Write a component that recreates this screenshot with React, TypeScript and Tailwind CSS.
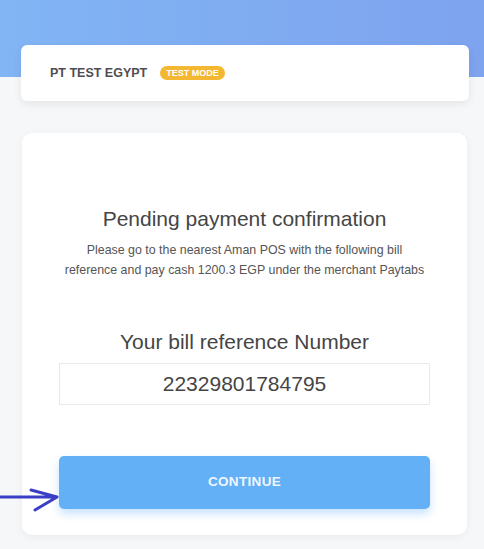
export default function App() {
  return (
    <main className="relative min-h-[549px] w-full overflow-hidden bg-[#f6f7f9] font-['Liberation_Sans',Arial,sans-serif]">
      {/* Blue header band */}
      <div className="absolute inset-x-0 top-0 h-[77px] bg-gradient-to-r from-[#81b5f4] to-[#7ea3ef]" />

      <div className="relative flex flex-col pl-[21px] pr-[15px] pt-[45px] pb-[14px]">
        {/* Merchant card */}
        <div className="flex h-[56px] items-center rounded-md bg-white pl-[29px] shadow-[0_3px_8px_rgba(0,0,0,0.08)]">
          <span className="text-[12.5px] font-bold text-[#4e4e52]">PT TEST EGYPT</span>
          <span className="ml-[13px] rounded-full bg-[#f4b731] px-[6px] py-[2px] text-[9px] font-bold leading-[10px] text-white">
            TEST MODE
          </span>
        </div>

        {/* Payment card */}
        <div className="mt-[32px] ml-[1px] mr-[2px] flex h-[402px] flex-col items-center rounded-[10px] bg-white px-[37px] pt-[74px] shadow-[0_2px_8px_rgba(0,0,0,0.05)]">
          <h1 className="text-[21px] leading-6 text-[#454545]">Pending payment confirmation</h1>
          <p className="mt-[9px] text-center text-[12.4px] leading-[20px] text-[#555]">
            Please go to the nearest Aman POS with the following bill
            <br />
            reference and pay cash 1200.3 EGP under the merchant Paytabs
          </p>

          <h2 className="mt-[50px] text-[21px] leading-6 text-[#454545]">Your bill reference Number</h2>
          <div className="mt-[9px] flex h-[42px] w-full items-center justify-center border border-[#e9e9ec] text-[21px] text-[#454545]">
            22329801784795
          </div>

          <button
            type="button"
            className="mt-[51px] h-[53px] w-full shrink-0 rounded-[5px] bg-[#64b0f6] text-[13.5px] font-bold tracking-wide text-[#eef6ff] shadow-[0_5px_8px_rgba(100,176,246,0.35)]"
          >
            CONTINUE
          </button>
        </div>
      </div>

      {/* Annotation arrow */}
      <svg className="absolute left-0 top-[486px]" width="62" height="28" viewBox="0 0 62 28">
        <path
          d="M0 11 H56 M31 4 L57 11 L35 24"
          fill="none"
          stroke="#3b3fc6"
          strokeWidth="3"
          strokeLinecap="round"
          strokeLinejoin="round"
        />
      </svg>
    </main>
  );
}
